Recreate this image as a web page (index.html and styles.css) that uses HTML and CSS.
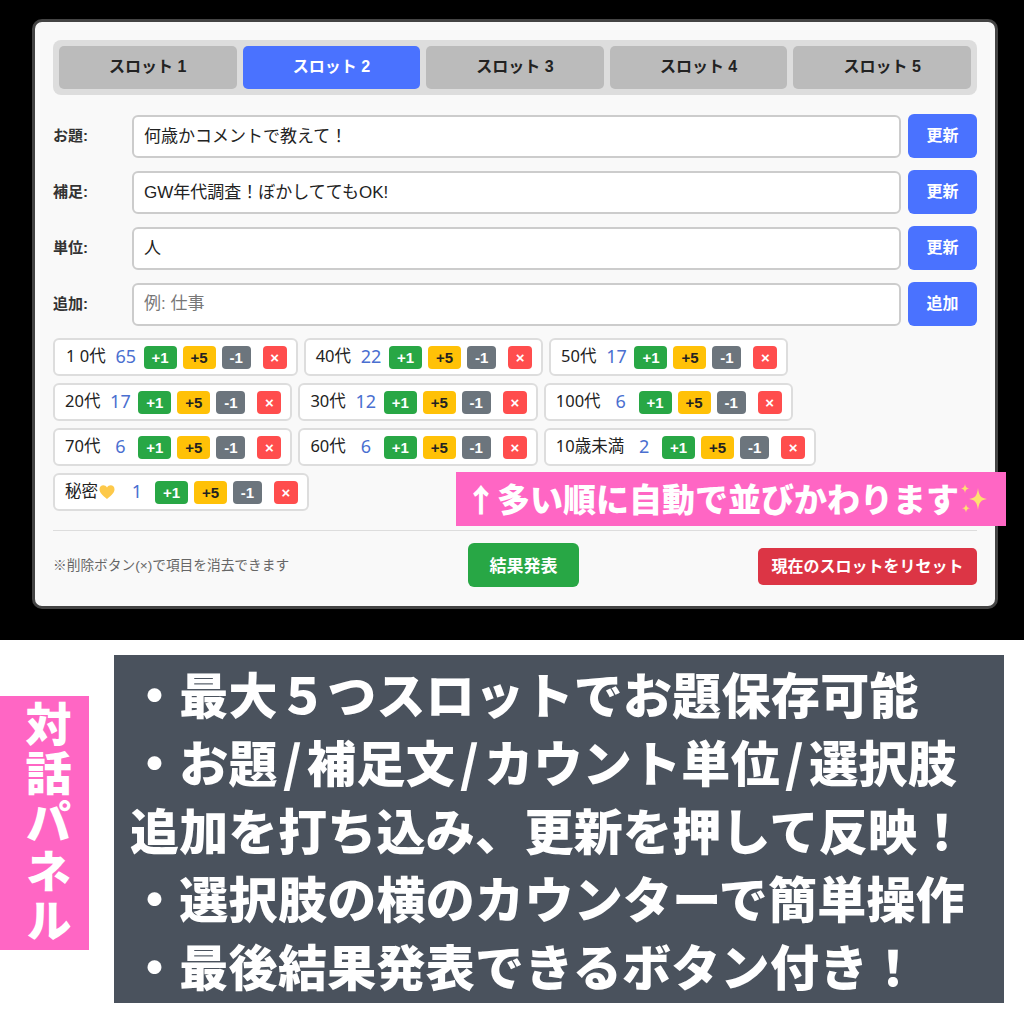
FILE: index.html
```html
<!DOCTYPE html>
<html lang="ja">
<head>
  <meta charset="UTF-8" />
  <title>対話パネル</title>
  <link rel="stylesheet" href="styles.css">
</head>
<body>
  <section class="screen">
    <div class="card">
      <div class="tabs">
        <button class="tab">スロット 1</button>
        <button class="tab active">スロット 2</button>
        <button class="tab">スロット 3</button>
        <button class="tab">スロット 4</button>
        <button class="tab">スロット 5</button>
      </div>

      <div class="row">
        <label>お題:</label>
        <input type="text" value="何歳かコメントで教えて！" />
        <button class="btn-update">更新</button>
      </div>
      <div class="row">
        <label>補足:</label>
        <input type="text" value="GW年代調査！ぼかしててもOK!" />
        <button class="btn-update">更新</button>
      </div>
      <div class="row">
        <label>単位:</label>
        <input type="text" value="人" />
        <button class="btn-update">更新</button>
      </div>
      <div class="row">
        <label>追加:</label>
        <input type="text" placeholder="例: 仕事" />
        <button class="btn-update">追加</button>
      </div>

      <div class="chips">
        <div class="chip">
          <span class="name name-wide">1 0代</span><span class="count">65</span>
          <button class="c plus1">+1</button><button class="c plus5">+5</button><button class="c minus">-1</button><button class="c del">×</button>
        </div>
        <div class="chip">
          <span class="name">40代</span><span class="count">22</span>
          <button class="c plus1">+1</button><button class="c plus5">+5</button><button class="c minus">-1</button><button class="c del">×</button>
        </div>
        <div class="chip">
          <span class="name">50代</span><span class="count">17</span>
          <button class="c plus1">+1</button><button class="c plus5">+5</button><button class="c minus">-1</button><button class="c del">×</button>
        </div>
        <div class="chip">
          <span class="name">20代</span><span class="count">17</span>
          <button class="c plus1">+1</button><button class="c plus5">+5</button><button class="c minus">-1</button><button class="c del">×</button>
        </div>
        <div class="chip">
          <span class="name">30代</span><span class="count">12</span>
          <button class="c plus1">+1</button><button class="c plus5">+5</button><button class="c minus">-1</button><button class="c del">×</button>
        </div>
        <div class="chip">
          <span class="name">100代</span><span class="count">6</span>
          <button class="c plus1">+1</button><button class="c plus5">+5</button><button class="c minus">-1</button><button class="c del">×</button>
        </div>
        <div class="chip">
          <span class="name">70代</span><span class="count">6</span>
          <button class="c plus1">+1</button><button class="c plus5">+5</button><button class="c minus">-1</button><button class="c del">×</button>
        </div>
        <div class="chip">
          <span class="name">60代</span><span class="count">6</span>
          <button class="c plus1">+1</button><button class="c plus5">+5</button><button class="c minus">-1</button><button class="c del">×</button>
        </div>
        <div class="chip">
          <span class="name">10歳未満</span><span class="count">2</span>
          <button class="c plus1">+1</button><button class="c plus5">+5</button><button class="c minus">-1</button><button class="c del">×</button>
        </div>
        <div class="chip">
          <span class="name">秘密<svg class="heart" viewBox="0 0 16 16"><path d="M8 15C3 11 .5 8.400 .5 5.200 .5 2.800 2.300 1.200 4.300 1.200 5.800 1.200 7.200 2 8 3.400 8.800 2 10.200 1.200 11.700 1.200 13.700 1.200 15.500 2.800 15.500 5.200 15.500 8.400 13 11 8 15Z" fill="#fdc94a"/></svg></span><span class="count">1</span>
          <button class="c plus1">+1</button><button class="c plus5">+5</button><button class="c minus">-1</button><button class="c del">×</button>
        </div>
      </div>

      <div class="footer">
        <span class="note">※削除ボタン(×)で項目を消去できます</span>
        <button class="btn-result">結果発表</button>
        <button class="btn-reset">現在のスロットをリセット</button>
      </div>
    </div>

    <div class="callout">
      <span class="arrow">↑</span>多い順に自動で並びかわります<svg class="sparkle" viewBox="0 0 30 30"><path d="M19 5C20 13 22 15 28 16 22 17 20 19 19 27 18 19 16 17 10 16 16 15 18 13 19 5Z" fill="#ffe070"/><path d="M6 1C6.500 4 7.500 5 10 5.500 7.500 6 6.500 7 6 10 5.500 7 4.500 6 2 5.500 4.500 5 5.500 4 6 1Z" fill="#ffe070"/><path d="M7 21C7.500 24 8.300 24.800 11 25.300 8.300 25.800 7.500 26.600 7 29.500 6.500 26.600 5.700 25.800 3 25.300 5.700 24.800 6.500 24 7 21Z" fill="#ffe070"/></svg>
    </div>
  </section>

  <section class="promo">
    <div class="side-label">対話パネル</div>
    <div class="panel">
      <p>・最大５つスロットでお題保存可能</p>
      <p>・お題<span class="sl">/</span>補足文<span class="sl">/</span>カウント単位<span class="sl">/</span>選択肢</p>
      <p>追加を打ち込み、更新を押して反映！</p>
      <p>・選択肢の横のカウンターで簡単操作</p>
      <p>・最後結果発表できるボタン付き！</p>
    </div>
  </section>
</body>
</html>
```

FILE: styles.css
```css
* {
  box-sizing: border-box;
}
body {
  margin: 0;
  width: 1024px;
  height: 1024px;
  overflow: hidden;
  background: #fff;
  font-family: "Liberation Sans", "Noto Sans CJK JP", sans-serif;
  color: #222;
}
button {
  font-family: inherit;
  border: none;
  cursor: pointer;
}

/* upper half: the app on black */
.screen {
  position: relative;
  height: 640px;
  background: #000;
  padding: 19px 26px 0 32px;
}
.card {
  height: 590px;
  background: #f9f9f9;
  border: 3px solid #444;
  border-radius: 10px;
  padding: 18px;
}
.tabs {
  display: flex;
  gap: 6px;
  padding: 6px;
  background: #ddd;
  border-radius: 8px;
  margin-bottom: 19px;
}
.tab {
  flex: 1;
  height: 43px;
  padding: 0 0 5px;
  background: #bbb;
  color: #222;
  font-size: 16px;
  font-weight: bold;
  border-radius: 5px;
}
.tab.active {
  background: #4a72ff;
  color: #fff;
}

.row {
  display: flex;
  align-items: center;
  gap: 7px;
  height: 44px;
  margin-bottom: 12px;
}
.row label {
  width: 72px;
  padding-bottom: 4px;
  font-size: 15px;
  font-weight: bold;
  color: #333;
}
.row input {
  flex: 1;
  height: 43px;
  padding: 0 10px 4px;
  font-family: inherit;
  font-size: 17px;
  color: #222;
  background: #fff;
  border: 2px solid #ccc;
  border-radius: 6px;
}
.row input:placeholder-shown {
  padding-bottom: 0;
}
.row input::placeholder {
  color: #777;
}
.btn-update {
  width: 69px;
  height: 44px;
  padding: 0 0 4px;
  background: #4a72ff;
  color: #fff;
  font-size: 16px;
  font-weight: bold;
  border-radius: 6px;
}

.chips {
  display: flex;
  flex-wrap: wrap;
  gap: 7px 6px;
}
.chip {
  display: flex;
  align-items: center;
  height: 38px;
  padding: 0 9px 0 9px;
  background: #fff;
  border: 2px solid #ddd;
  border-radius: 6px;
}
.name {
  display: flex;
  align-items: center;
  font-family: "Noto Sans", "Noto Sans CJK JP", sans-serif;
  font-size: 16.500px;
  white-space: pre;
  padding: 0 0 4px 1px;
  margin-right: 4px;
}
.name-wide {
  padding-left: 2px;
}
.heart {
  width: 16px;
  height: 16px;
  margin: 3px 2px 0 1px;
}
.count {
  width: 32px;
  margin-right: 2px;
  text-align: center;
  font-family: "Noto Sans", sans-serif;
  font-size: 18px;
  padding-bottom: 3px;
  color: #4a6fd0;
}
.c {
  width: 33px;
  height: 23px;
  padding: 0;
  margin-right: 6px;
  font-size: 15px;
  font-weight: bold;
  border-radius: 4px;
}
.plus1 {
  background: #28a745;
  color: #fff;
}
.plus5 {
  background: #ffc107;
  color: #222;
}
.minus {
  width: 29px;
  background: #6c757d;
  color: #fff;
  margin-right: 12px;
}
.del {
  width: 24px;
  margin-right: 0;
  background: #ff4d4d;
  color: #fff;
}

.footer {
  display: flex;
  justify-content: space-between;
  align-items: center;
  margin-top: 19px;
  padding-top: 12px;
  border-top: 1px solid #ddd;
}
.note {
  padding-bottom: 2px;
  font-size: 13.700px;
  color: #666;
}
.btn-result {
  width: 111px;
  height: 44px;
  padding: 0 0 2px;
  background: #28a745;
  color: #fff;
  font-size: 17px;
  font-weight: bold;
  border-radius: 6px;
}
.btn-reset {
  width: 219px;
  height: 37px;
  margin-top: 2px;
  padding: 0 0 3px;
  background: #dc3545;
  color: #fff;
  font-size: 16px;
  font-weight: bold;
  border-radius: 5px;
}

/* pink note pasted over the app */
.callout {
  position: absolute;
  left: 456px;
  top: 472px;
  width: 550px;
  height: 54px;
  display: flex;
  align-items: center;
  padding: 0 0 2px 9px;
  background: #ff66c4;
  color: #fff;
  font-size: 33px;
  font-weight: 900;
  white-space: nowrap;
}
.arrow {
  font-family: "Noto Sans CJK JP", sans-serif;
  font-size: 32px;
}
.sparkle {
  width: 30px;
  height: 30px;
}

/* lower half: feature list */
.promo {
  display: flex;
  align-items: flex-start;
  gap: 25px;
  height: 384px;
}
.side-label {
  width: 89px;
  height: 254px;
  margin-top: 56px;
  display: flex;
  align-items: center;
  justify-content: center;
  writing-mode: vertical-rl;
  background: #ff66c4;
  color: #fff;
  font-size: 46px;
  font-weight: 900;
  letter-spacing: 3px;
}
.panel {
  width: 890px;
  height: 348px;
  margin-top: 15px;
  padding: 4px 0 0 16px;
  background: #4a525d;
  color: #fff;
  font-family: "Noto Sans CJK JP", sans-serif;
  font-size: 49px;
  font-weight: 900;
  line-height: 68px;
  letter-spacing: .3px;
}
.panel p {
  margin: 0;
  white-space: nowrap;
}
.sl {
  margin: 0 5px;
}
```
